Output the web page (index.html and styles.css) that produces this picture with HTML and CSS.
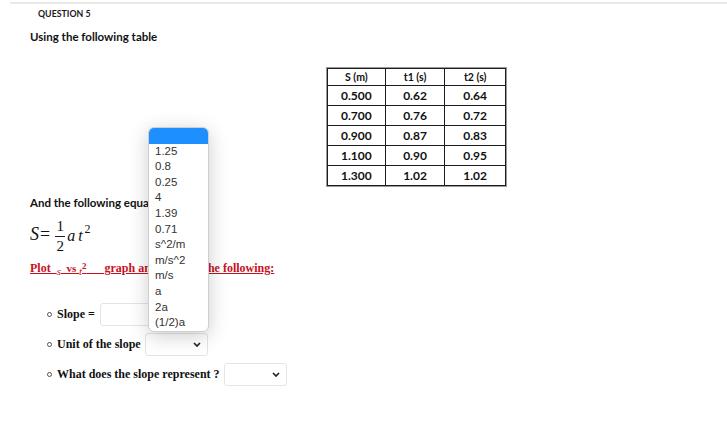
FILE: index.html
```html
<!DOCTYPE html>
<html>
<head>
<meta charset="utf-8">
<link rel="stylesheet" href="styles.css">
</head>
<body>
<div class="topline"></div>
<div class="page">
  <div class="qnum">QUESTION 5</div>
  <p class="intro">Using the following table</p>
  <div class="table-wrap">
    <table class="data">
      <tr class="head"><td class="c1">S (m)</td><td class="c2">t1 (s)</td><td class="c3">t2 (s)</td></tr>
      <tr><td>0.500</td><td>0.62</td><td>0.64</td></tr>
      <tr><td>0.700</td><td>0.76</td><td>0.72</td></tr>
      <tr><td>0.900</td><td>0.87</td><td>0.83</td></tr>
      <tr><td>1.100</td><td>0.90</td><td>0.95</td></tr>
      <tr><td>1.300</td><td>1.02</td><td>1.02</td></tr>
    </table>
  </div>
  <p class="intro eq-intro">And the following equation</p>
  <div class="equation">
    <span class="var big">S</span><span class="eq">=</span>
    <span class="frac"><span class="num">1</span><span class="bar"></span><span class="den">2</span></span>
    <span class="var mid">a</span><span class="var mid t">t</span><span class="sup">2</span>
  </div>
  <p class="task">Plot&nbsp;&nbsp;<i class="lo">s</i><span class="sm">&nbsp;&nbsp;vs&nbsp;</span><i class="lo">t</i><sup class="sq">2</sup>&nbsp;&nbsp;&nbsp;&nbsp;&nbsp;&nbsp;graph and find out the following:</p>
  <ul class="answers">
    <li><span class="bullet"></span>Slope =<span class="field input"></span></li>
    <li><span class="bullet"></span>Unit of the slope<span class="field select"><svg class="chev" viewBox="0 0 8 5" width="8" height="5"><polyline points="1,1 4,4 7,1" fill="none" stroke="#222" stroke-width="1.7"/></svg></span></li>
    <li><span class="bullet"></span>What does the slope represent ?<span class="field select"><svg class="chev" viewBox="0 0 8 5" width="8" height="5"><polyline points="1,1 4,4 7,1" fill="none" stroke="#222" stroke-width="1.7"/></svg></span></li>
  </ul>
</div>
<div class="dropdown">
  <div class="opt sel">&nbsp;</div>
  <div class="opt">1.25</div>
  <div class="opt">0.8</div>
  <div class="opt">0.25</div>
  <div class="opt">4</div>
  <div class="opt">1.39</div>
  <div class="opt">0.71</div>
  <div class="opt">s^2/m</div>
  <div class="opt">m/s^2</div>
  <div class="opt">m/s</div>
  <div class="opt">a</div>
  <div class="opt">2a</div>
  <div class="opt">(1/2)a</div>
</div>
</body>
</html>
```
FILE: styles.css
```css
html, body {
  margin: 0;
  padding: 0;
  background: #fff;
}
body {
  width: 727px;
  height: 439px;
  overflow: hidden;
  position: relative;
  font-family: "Lato", "Open Sans", sans-serif;
  color: #111;
}
.topline {
  margin: 2px 0 0 10px;
  height: 2px;
  background: #e9e9e9;
}
.page {
  padding: 4px 0 0 30px;
}
.qnum {
  margin-left: 8px;
  font-size: 8.8px;
  font-weight: 700;
  line-height: 12px;
  color: #1a1a1a;
}
.intro {
  margin: 10px 0 0 0;
  font-size: 11.5px;
  font-weight: 700;
  line-height: 14px;
  color: #111;
}
.table-wrap {
  margin: 23px 0 0 296px;
  width: 179px;
  border: 1px solid #9a9a9a;
}
.data {
  border-collapse: collapse;
  width: 179px;
}
.data td {
  border: 1.5px solid #1c1c1c;
  height: 19px;
  padding: 0;
  text-align: center;
  font-size: 12px;
  font-weight: 700;
  line-height: 14px;
  color: #111;
}
.data tr.head td {
  height: 16px;
  font-size: 10.5px;
}
.data .c1 { width: 57px; }
.data .c2 { width: 59px; }
.data .c3 { width: 60px; }
.eq-intro {
  margin-top: 9px;
}
.equation {
  display: flex;
  align-items: center;
  height: 43px;
  margin-top: 3px;
  font-family: "Liberation Serif", serif;
  color: #111;
}
.var { font-style: italic; }
.big { font-size: 18px; margin-top: 0; }
.eq { font-size: 18px; margin: 0 3px 0 1px; }
.frac {
  display: inline-flex;
  flex-direction: column;
  align-items: center;
  font-size: 15px;
  line-height: 16px;
  margin: 2px 2px 0 2px;
}
.bar {
  width: 10px;
  height: 1px;
  background: #222;
  margin: 2px 0 1px 0;
}
.mid { font-size: 16px; margin-top: 3px; }
.t { margin-left: 3px; }
.sup {
  font-size: 12px;
  margin: -10px 0 0 2px;
  font-family: "Liberation Serif", serif;
}
.task {
  margin: 5px 0 0 0;
  font-family: "Liberation Serif", serif;
  font-size: 12px;
  font-weight: 700;
  color: #c8101e;
  text-decoration: underline;
  line-height: 14px;
  white-space: nowrap;
}
.task .lo {
  font-size: 11px;
  vertical-align: -3px;
  font-weight: 400;
}
.task .sm {
  font-size: 11px;
}
.task .sq {
  font-size: 9px;
  vertical-align: 3px;
  line-height: 0;
}
.answers {
  list-style: none;
  margin: 25px 0 0 17px;
  padding: 0;
  font-family: "Liberation Serif", serif;
  font-size: 12px;
  font-weight: 700;
  color: #111;
}
.answers li {
  display: flex;
  align-items: center;
  height: 23px;
  margin-bottom: 7px;
}
.bullet {
  width: 3px;
  height: 3px;
  border: 1px solid #555;
  border-radius: 50%;
  margin-right: 5px;
}
.field {
  display: inline-flex;
  align-items: center;
  justify-content: flex-end;
  box-sizing: border-box;
  height: 23px;
  border: 1px solid #e4e4e4;
  border-radius: 3px;
  background: #fff;
  margin-left: 4px;
}
.input { width: 62px; margin-left: 5px; }
.select { width: 63px; padding-right: 6px; }
.chev { display: block; }
.dropdown {
  position: absolute;
  left: 148px;
  top: 127px;
  width: 61px;
  box-sizing: border-box;
  border: 1px solid #cfcfcf;
  border-radius: 6px;
  overflow: hidden;
  background: #fff;
  box-shadow: 0 4px 20px rgba(0,0,0,0.2);
  font-family: "Liberation Sans", Arial, sans-serif;
  font-size: 11.5px;
  color: #333;
}
.opt {
  height: 15.6px;
  line-height: 14px;
  padding-left: 6px;
  white-space: nowrap;
}
.opt.sel {
  background: #1e8fff;
}
```
